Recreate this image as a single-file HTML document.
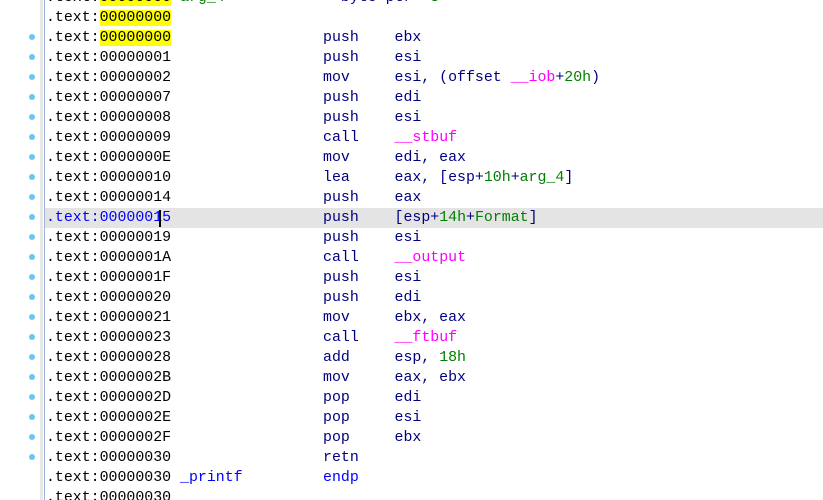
<!DOCTYPE html>
<html><head><meta charset="utf-8"><style>
html,body{margin:0;padding:0;background:#fff;width:823px;height:500px;overflow:hidden;position:relative}
.g{position:absolute;left:40px;top:0;width:3px;height:500px;background:#e8e8e8}
.b{position:absolute;left:44px;top:0;width:1px;height:500px;background:#9ab4d8}
.r{position:absolute;left:46px;height:20px;line-height:20px;font-family:"Liberation Mono",monospace;font-size:14.9px;white-space:pre;color:#000;width:777px}
.hl{position:absolute;left:45px;width:778px;height:20px;background:#e4e4e4}
.d{position:absolute;left:29px;width:6px;height:6px;border-radius:50%;background:#6cc6f0}
.n{color:#000080}.m{color:#ff00ff}.gr{color:#008000}.bl{color:#0000ff}
.y{background:#ffff00}
.cur{position:absolute;left:159px;top:210px;width:2px;height:17px;background:#000}
</style></head><body>
<div class="g"></div><div class="b"></div>
<div class="hl" style="top:208px"></div>
<div class="r" style="top:-12px">.text:<span class="y">00000000</span> <span class="gr">arg_4</span>           <span class="n">= byte ptr  </span><span class="gr">8</span></div>
<div class="r" style="top:8px">.text:<span class="y">00000000</span></div>
<div class="r" style="top:28px">.text:<span class="y">00000000</span>                 <span class="n">push    ebx</span></div>
<div class="r" style="top:48px">.text:00000001                 <span class="n">push    esi</span></div>
<div class="r" style="top:68px">.text:00000002                 <span class="n">mov     esi, (offset </span><span class="m">__iob</span><span class="n">+</span><span class="gr">20h</span><span class="n">)</span></div>
<div class="r" style="top:88px">.text:00000007                 <span class="n">push    edi</span></div>
<div class="r" style="top:108px">.text:00000008                 <span class="n">push    esi</span></div>
<div class="r" style="top:128px">.text:00000009                 <span class="n">call    </span><span class="m">__stbuf</span></div>
<div class="r" style="top:148px">.text:0000000E                 <span class="n">mov     edi, eax</span></div>
<div class="r" style="top:168px">.text:00000010                 <span class="n">lea     eax, [esp+</span><span class="gr">10h</span><span class="n">+</span><span class="gr">arg_4</span><span class="n">]</span></div>
<div class="r" style="top:188px">.text:00000014                 <span class="n">push    eax</span></div>
<div class="r" style="top:208px"><span class="bl">.text:00000015</span>                 <span class="n">push    [esp+</span><span class="gr">14h</span><span class="n">+</span><span class="gr">Format</span><span class="n">]</span></div>
<div class="cur"></div>
<div class="r" style="top:228px">.text:00000019                 <span class="n">push    esi</span></div>
<div class="r" style="top:248px">.text:0000001A                 <span class="n">call    </span><span class="m">__output</span></div>
<div class="r" style="top:268px">.text:0000001F                 <span class="n">push    esi</span></div>
<div class="r" style="top:288px">.text:00000020                 <span class="n">push    edi</span></div>
<div class="r" style="top:308px">.text:00000021                 <span class="n">mov     ebx, eax</span></div>
<div class="r" style="top:328px">.text:00000023                 <span class="n">call    </span><span class="m">__ftbuf</span></div>
<div class="r" style="top:348px">.text:00000028                 <span class="n">add     esp, </span><span class="gr">18h</span></div>
<div class="r" style="top:368px">.text:0000002B                 <span class="n">mov     eax, ebx</span></div>
<div class="r" style="top:388px">.text:0000002D                 <span class="n">pop     edi</span></div>
<div class="r" style="top:408px">.text:0000002E                 <span class="n">pop     esi</span></div>
<div class="r" style="top:428px">.text:0000002F                 <span class="n">pop     ebx</span></div>
<div class="r" style="top:448px">.text:00000030                 <span class="n">retn</span></div>
<div class="r" style="top:468px">.text:00000030 <span class="bl">_printf</span>         <span class="bl">endp</span></div>
<div class="r" style="top:488px">.text:00000030</div>
<div class="d" style="top:34px"></div><div class="d" style="top:54px"></div><div class="d" style="top:74px"></div><div class="d" style="top:94px"></div><div class="d" style="top:114px"></div><div class="d" style="top:134px"></div><div class="d" style="top:154px"></div><div class="d" style="top:174px"></div><div class="d" style="top:194px"></div><div class="d" style="top:214px"></div><div class="d" style="top:234px"></div><div class="d" style="top:254px"></div><div class="d" style="top:274px"></div><div class="d" style="top:294px"></div><div class="d" style="top:314px"></div><div class="d" style="top:334px"></div><div class="d" style="top:354px"></div><div class="d" style="top:374px"></div><div class="d" style="top:394px"></div><div class="d" style="top:414px"></div><div class="d" style="top:434px"></div><div class="d" style="top:454px"></div>
</body></html>
